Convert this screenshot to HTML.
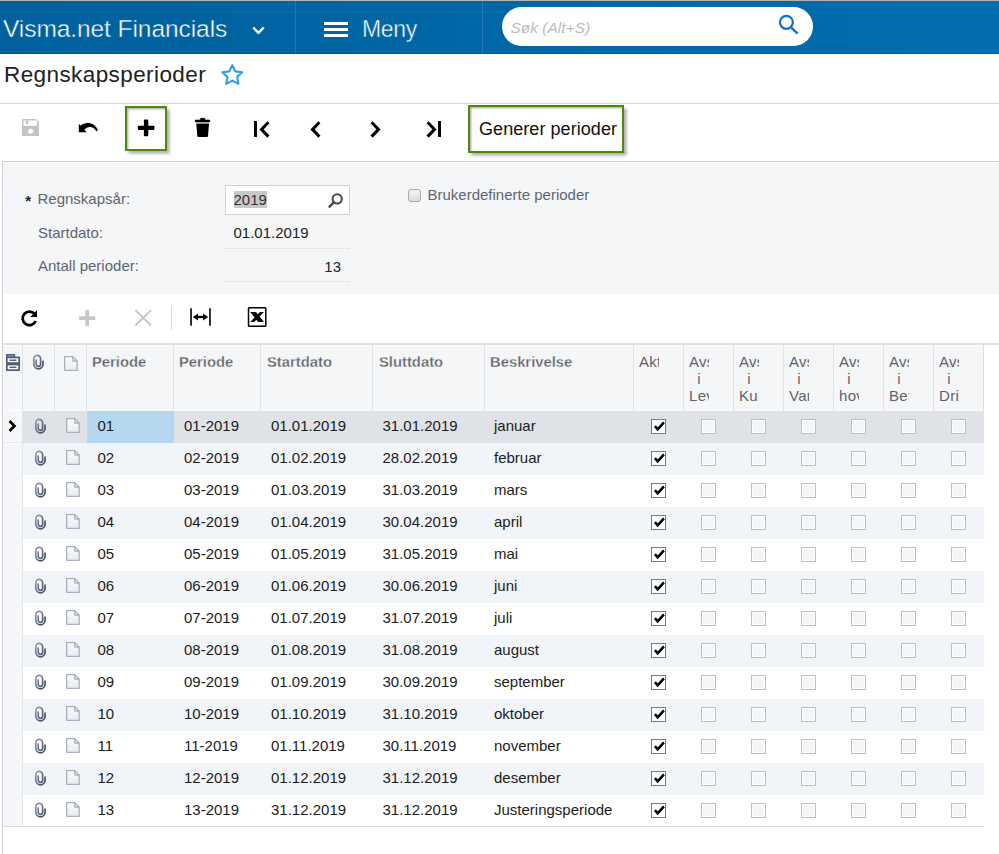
<!DOCTYPE html>
<html>
<head>
<meta charset="utf-8">
<title>Regnskapsperioder</title>
<style>
*{box-sizing:border-box;margin:0;padding:0}
html,body{width:999px;height:854px;overflow:hidden;background:#fff}
body{position:relative;font-family:"Liberation Sans",sans-serif;font-size:15px;color:#222;}
.abs{position:absolute}
.t{position:absolute;white-space:nowrap;line-height:1}
svg{position:absolute;overflow:visible}
/* header */
#topline{left:0;top:0;width:999px;height:1px;background:#b5b5b5}
#hdr{left:0;top:1px;width:999px;height:53px;background:linear-gradient(90deg,#00619d 0%,#006eaf 100%);border-bottom:1px solid rgba(0,40,90,.25)}
.hsep{top:1px;width:1px;height:53px;background:rgba(255,255,255,.13)}
#brand{left:3px;top:17px;font-size:24.5px;letter-spacing:-0.07px;color:#fff;-webkit-text-stroke:0.4px #00629f}
#meny{left:362px;top:18px;font-size:23px;letter-spacing:-0.3px;color:#fff;-webkit-text-stroke:0.4px #0066a5}
.hb{left:324px;width:24px;height:3px;background:#fff}
#search{left:502px;top:7px;width:310.5px;height:39px;border-radius:20px;background:#fff}
#sph{left:510.5px;top:19.5px;font-size:15.5px;font-style:italic;color:#bdbdbd}
/* title */
#title{left:4px;top:63.5px;font-size:22.5px;letter-spacing:0.41px;color:#222}
.hline{left:0;width:999px;height:1px;background:#d3d6db}
/* toolbar */
.gbtn{border:2px solid #4b8a0b;background:#fff;box-shadow:2.5px 2.5px 3px rgba(0,0,0,.33), inset 1.5px 1.5px 1.5px rgba(0,0,0,.28)}
#gen{left:479px;top:120px;font-size:18px;letter-spacing:0.06px;color:#111}
/* form */
#form{left:2px;top:161px;width:997px;height:132.5px;background:#f5f6f8;border-top:1px solid #cfd1d5;box-shadow:inset 0 1px 0 #fff}
#lborder{left:2px;top:161px;width:1px;height:693px;background:#cfd2d7}
.lbl{color:#5f6570;font-size:15px}
.val{color:#222;font-size:15px}
.dot{height:1px;left:225px;width:125px;background-image:linear-gradient(90deg,#d4d6da 50%,transparent 50%);background-size:2px 1px}
#inp{left:225px;top:185px;width:125px;height:29.5px;background:#fff;border:1px solid #cfd2d6}
#sel{left:233.6px;top:191px;width:33.4px;height:16.7px;background:#c8c8c8}
#cb0{left:408px;top:189px;width:13px;height:13px;border:1px solid #a9a9a9;border-radius:3px;background:linear-gradient(#f4f4f4,#dcdcdc)}
/* grid */
#gline{left:3px;top:343px;width:996px;height:2px;background:#dfe1e5}
#ghead{left:3px;top:345px;width:981px;height:65.5px;box-shadow:inset 0 -1.5px 0 #fafbfc,inset 0 1px 0 #fcfcfd;background:#f5f6f8}
.vs{top:345px;width:1px;height:65.5px;background:#dfe2e7}
.ht{position:absolute;top:354px;font-weight:bold;font-size:14.8px;line-height:17px;color:#5e6166;-webkit-text-stroke:0.3px #f5f6f8;white-space:nowrap;overflow:hidden}
.hc{top:352.6px;-webkit-text-stroke:0;width:20.3px;text-align:center;font-weight:normal;font-size:15px;letter-spacing:0.3px;color:#5f6369}
.row{position:absolute;left:23px;width:961px;height:32px}
.c{font-size:15px;color:#1c1c1c}
.ck{position:absolute;width:15px;height:15px;border:1px solid #bdbfc3;background:#f4f5f7;box-shadow:inset 0 0 0 1px #fff}
.row.alt{background:#f1f4f9}
.row.sel{background:#dfe2e7}
#selcell{left:87px;width:87px;height:32px;background:#b5d6ef}
#rowsel{left:3px;top:410.5px;width:20px;height:416px;background:#f5f6f8}
.ck.on{border-color:#7a7a7a;background:#fff;box-shadow:none}
#gbot{left:3px;top:826px;width:981px;height:1px;background:#d9dce0}
</style>
</head>
<body>
<svg width="0" height="0" style="left:0;top:0"><defs>
<linearGradient id="cg" x1="0" y1="0" x2="1" y2="1"><stop offset="0" stop-color="#97a0ad"/><stop offset="1" stop-color="#36425a"/></linearGradient>
<linearGradient id="fg" x1="0" y1="0" x2="0" y2="1"><stop offset="0" stop-color="#fbfbfc"/><stop offset="1" stop-color="#e9ebef"/></linearGradient>
</defs></svg>
<div class="abs" id="hdr"></div>
<div class="abs" id="topline"></div>
<div class="t" id="brand">Visma.net Financials</div>
<svg style="left:252px;top:26px" width="13" height="9" viewBox="0 0 13 9"><path d="M1.2 1.5 L6.5 6.8 L11.8 1.5" fill="none" stroke="#fff" stroke-width="2.4"/></svg>
<div class="abs hsep" style="left:295px"></div>
<div class="abs hb" style="top:22px"></div>
<div class="abs hb" style="top:28px"></div>
<div class="abs hb" style="top:34px"></div>
<div class="t" id="meny">Meny</div>
<div class="abs hsep" style="left:482px"></div>
<div class="abs" id="search"></div>
<div class="t" id="sph">Søk (Alt+S)</div>
<svg style="left:777px;top:14px" width="24" height="24" viewBox="0 0 24 24"><circle cx="9.4" cy="8.3" r="6.5" fill="none" stroke="#1670c6" stroke-width="2.2"/><path d="M14.3 13.6 L20.6 19.6" stroke="#1670c6" stroke-width="2.4" fill="none"/></svg>

<div class="t" id="title">Regnskapsperioder</div>
<svg style="left:0;top:0" width="260" height="100" viewBox="0 0 260 100"><path d="M232.30 65.10 L235.30 71.37 L242.19 72.29 L237.15 77.08 L238.41 83.91 L232.30 80.60 L226.19 83.91 L227.45 77.08 L222.41 72.29 L229.30 71.37 Z" fill="none" stroke="#2e9de8" stroke-width="2.1" stroke-linejoin="round"/></svg>
<div class="abs hline" style="top:103px"></div>

<!-- toolbar -->
<div class="abs gbtn" style="left:125px;top:106px;width:42px;height:45px"></div>
<div class="abs gbtn" style="left:468px;top:105px;width:156px;height:47.5px"></div>
<div class="t" id="gen">Generer perioder</div>

<!-- toolbar icons -->
<svg style="left:22px;top:119.2px" width="17" height="17" viewBox="0 0 17 17"><path d="M0.6 0 H14 L17 3 V16.4 Q17 17 16.4 17 H0.6 Q0 17 0 16.4 V0.6 Q0 0 0.6 0Z" fill="#c4c4c4"/><rect x="1.5" y="1.5" width="13.6" height="5.4" fill="#fff"/><rect x="3.8" y="1.5" width="2.4" height="3.4" fill="#c4c4c4"/><circle cx="8.6" cy="12.3" r="2.5" fill="#fff"/></svg>
<svg style="left:0;top:0" width="120" height="160" viewBox="0 0 120 160"><path d="M78.8 123.8 L78.8 132.3 L86.8 132.3 L84.3 129.8 C86.8 126.6 92.8 125.2 96.4 131.2 L97.9 130.4 C95.6 122.4 85.2 120.8 80.7 125.7 Z" fill="#000"/></svg>
<svg style="left:0;top:0" width="170" height="150" viewBox="0 0 170 150"><rect x="137.8" y="125.7" width="16.6" height="4.4" rx="1" fill="#000"/><rect x="143.9" y="119.6" width="4.4" height="16.6" rx="1" fill="#000"/></svg>
<svg style="left:194px;top:117px" width="18" height="21" viewBox="0 0 18 21"><path d="M6.4 1.3 H10.9 V3 H15.7 V5 H1.3 V3 H6.4 Z" fill="#000" stroke="#000" stroke-width="0.6" stroke-linejoin="round"/><rect x="2.4" y="5.1" width="12.2" height="1.7" fill="#aaa"/><path d="M2.3 6.8 H15 L14 19 Q13.9 20 12.9 20 H4.4 Q3.4 20 3.3 19 Z" fill="#000"/></svg>
<div class="abs" style="left:254px;top:121px;width:3px;height:16px;background:#000"></div>
<svg style="left:258.6px;top:120.5px" width="12" height="17" viewBox="0 0 12 17"><path d="M9.4 1.2 L2.5 8.4 L9.4 15.6" stroke="#000" stroke-width="3" fill="none"/></svg>
<svg style="left:310.4px;top:120.5px" width="12" height="17" viewBox="0 0 12 17"><path d="M9.4 1.2 L2.5 8.4 L9.4 15.6" stroke="#000" stroke-width="3" fill="none"/></svg>
<svg style="left:369px;top:120.5px" width="12" height="17" viewBox="0 0 12 17"><path d="M2.6 1.2 L9.5 8.4 L2.6 15.6" stroke="#000" stroke-width="3" fill="none"/></svg>
<svg style="left:424.7px;top:120.5px" width="12" height="17" viewBox="0 0 12 17"><path d="M2.6 1.2 L9.5 8.4 L2.6 15.6" stroke="#000" stroke-width="3" fill="none"/></svg>
<div class="abs" style="left:438.3px;top:121px;width:3px;height:16px;background:#000"></div>

<!-- form -->
<div class="abs" id="form"></div>
<div class="t lbl" style="left:25.2px;top:192.5px;color:#222;font-size:15px;font-weight:bold">*</div>
<div class="t lbl" style="left:37.5px;top:190.5px">Regnskapsår:</div>
<div class="t lbl" style="left:38px;top:224.5px">Startdato:</div>
<div class="t lbl" style="left:38px;top:257.5px">Antall perioder:</div>
<div class="abs" id="inp"></div>
<div class="abs" id="sel"></div>
<svg style="left:325px;top:190px" width="22" height="20" viewBox="325 190 22 20"><circle cx="337.2" cy="198.9" r="4.6" fill="none" stroke="#4a4a4a" stroke-width="2.1"/><path d="M334 202.2 L329.6 206.6" stroke="#4a4a4a" stroke-width="2.6" stroke-linecap="round" fill="none"/></svg>
<div class="t val" style="left:233.5px;top:191.5px;color:#333">2019</div>
<div class="t val" style="left:233.5px;top:225px">01.01.2019</div>
<div class="abs dot" style="top:248px"></div>
<div class="t val" style="left:324.3px;top:259px">13</div>
<div class="abs dot" style="top:281px"></div>
<div class="abs" id="cb0"></div>
<div class="t lbl" style="left:427.5px;top:186.5px">Brukerdefinerte perioder</div>

<!-- grid toolbar -->
<svg style="left:0;top:290px" width="300" height="60" viewBox="0 290 300 60">
<path d="M34.6 313.9 A6.8 6.8 0 1 0 35.7 321" fill="none" stroke="#000" stroke-width="2.8"/>
<path d="M37 310.1 V316.9 H30.4 Z" fill="#000"/>
<path d="M87.2 310 V326.2 M79.1 318.1 H95.3" stroke="#c6c6c6" stroke-width="3.6" fill="none"/>
<path d="M135.4 310.1 L151 325.5 M151 310.1 L135.4 325.5" stroke="#c6c6c6" stroke-width="2" fill="none"/>
<path d="M171.5 306 V330" stroke="#d9d9d9" stroke-width="1"/>
<path d="M191.05 308.3 V325.8 M209.95 308.3 V325.8" stroke="#000" stroke-width="1.6" fill="none"/>
<path d="M195.5 317 H205.5" stroke="#000" stroke-width="2.4" fill="none"/>
<path d="M192.8 317 L198 313.4 V320.6 Z M208.2 317 L203 313.4 V320.6 Z" fill="#000"/>
<rect x="248.5" y="307.8" width="17.3" height="18.5" rx="0.8" fill="#fff" stroke="#000" stroke-width="1.5"/>
<path d="M250.2 312 H256 L264 321.9 H258.2 Z" fill="#000"/><path d="M264 312 H260 L250.2 321.9 H254.2 Z" fill="#000"/>
</svg>

<!-- grid -->
<div class="abs" id="gline"></div>
<div class="abs" id="ghead"></div>
<div class="abs" id="rowsel"></div>
<div class="abs vs" style="left:22px"></div><div class="abs vs" style="left:54px"></div><div class="abs vs" style="left:86px"></div><div class="abs vs" style="left:173px"></div><div class="abs vs" style="left:260px"></div><div class="abs vs" style="left:372px"></div><div class="abs vs" style="left:484px"></div><div class="abs vs" style="left:633px"></div><div class="abs vs" style="left:683px"></div><div class="abs vs" style="left:733px"></div><div class="abs vs" style="left:783px"></div><div class="abs vs" style="left:833px"></div><div class="abs vs" style="left:883px"></div><div class="abs vs" style="left:933px"></div><div class="abs vs" style="left:983px;background:#d9dce1"></div>
<svg style="left:6px;top:353.8px" width="14" height="17" viewBox="0 0 14 17"><path d="M0 0.6 Q0 0 0.6 0 H8.6 Q9.2 0 9.2 0.6 V2.6 H13.4 Q14 2.6 14 3.2 V16.4 Q14 17 13.4 17 H0.6 Q0 17 0 16.4 Z" fill="#4f6079"/><rect x="1.7" y="4.3" width="10.6" height="3.9" fill="#fff"/><rect x="1.7" y="11.4" width="10.6" height="3.9" fill="#fff"/><rect x="3.6" y="5.5" width="6.8" height="1.5" fill="#4f6079"/><rect x="3.6" y="12.6" width="6.8" height="1.5" fill="#4f6079"/><rect x="1.6" y="1.2" width="6" height="1.2" fill="#8b97a8"/></svg>
<svg style="left:32.1px;top:354.3px" width="12" height="17" viewBox="0 0 12 17"><path d="M11 7.2 V10.2 A4.6 4.6 0 0 1 1.8 10.2 V4.75 A3.4 3.4 0 0 1 8.6 4.75 V10.2 A2.2 2.2 0 0 1 4.2 10.2 V6" fill="none" stroke="url(#cg)" stroke-width="1.7" stroke-linecap="round"/></svg>
<svg style="left:64px;top:355.6px" width="14" height="15" viewBox="0 0 14 15"><path d="M0.65 0.65 H8.8 L13.15 5 V14.35 H0.65 Z" fill="url(#fg)" stroke="#abb0ba" stroke-width="1.3" stroke-linejoin="round"/><path d="M8.8 0.65 V5 H13.15" fill="none" stroke="#abb0ba" stroke-width="1.3" stroke-linejoin="round"/></svg>
<div class="ht" style="left:92px">Periode</div><div class="ht" style="left:179px">Periode</div><div class="ht" style="left:267px">Startdato</div><div class="ht" style="left:379px">Sluttdato</div><div class="ht" style="left:490px">Beskrivelse</div><div class="ht hc" style="left:639.0px">Aktiv</div><div class="ht hc" style="left:689.0px">Avsluttet<br>i<br>Leverandør</div><div class="ht hc" style="left:739.0px">Avsluttet<br>i<br>Kunde</div><div class="ht hc" style="left:789.0px">Avsluttet<br>i<br>Varelager</div><div class="ht hc" style="left:839.0px">Avsluttet<br>i<br>hovedbok</div><div class="ht hc" style="left:889.0px">Avsluttet<br>i<br>Betaling</div><div class="ht hc" style="left:939.0px">Avsluttet<br>i<br>Drift</div>
<svg style="left:8px;top:419.6px" width="9" height="12" viewBox="0 0 9 12"><path d="M1.6 1 L6.4 6 L1.6 11" stroke="#000" stroke-width="2.8" fill="none"/></svg>

<div class="row sel" style="top:410.5px"></div>
<div class="abs" id="selcell" style="top:410.5px"></div>
<svg style="left:34px;top:417.5px" width="12" height="17" viewBox="0 0 12 17"><path d="M11 7.2 V10.2 A4.6 4.6 0 0 1 1.8 10.2 V4.75 A3.4 3.4 0 0 1 8.6 4.75 V10.2 A2.2 2.2 0 0 1 4.2 10.2 V6" fill="none" stroke="url(#cg)" stroke-width="1.7" stroke-linecap="round"/></svg>
<svg style="left:66px;top:418.4px" width="14" height="15" viewBox="0 0 14 15"><path d="M0.65 0.65 H8.8 L13.15 5 V14.35 H0.65 Z" fill="url(#fg)" stroke="#abb0ba" stroke-width="1.3" stroke-linejoin="round"/><path d="M8.8 0.65 V5 H13.15" fill="none" stroke="#abb0ba" stroke-width="1.3" stroke-linejoin="round"/></svg>
<div class="t c" style="left:97.5px;top:418.0px">01</div>
<div class="t c" style="left:184px;top:418.0px">01-2019</div>
<div class="t c" style="left:271px;top:418.0px">01.01.2019</div>
<div class="t c" style="left:382.5px;top:418.0px">31.01.2019</div>
<div class="t c" style="left:494px;top:418.0px">januar</div>
<div class="ck on" style="left:651px;top:419.0px"><svg style="left:1px;top:0.4px" width="11" height="11" viewBox="0 0 11 11"><path d="M1.9 6.2 L4.7 9.3 L10.9 2.4" fill="none" stroke="#000" stroke-width="2.5"/></svg></div>
<div class="ck" style="left:701px;top:419.0px"></div>
<div class="ck" style="left:751px;top:419.0px"></div>
<div class="ck" style="left:801px;top:419.0px"></div>
<div class="ck" style="left:851px;top:419.0px"></div>
<div class="ck" style="left:901px;top:419.0px"></div>
<div class="ck" style="left:951px;top:419.0px"></div>
<div class="row alt" style="top:442.5px"></div>
<svg style="left:34px;top:449.5px" width="12" height="17" viewBox="0 0 12 17"><path d="M11 7.2 V10.2 A4.6 4.6 0 0 1 1.8 10.2 V4.75 A3.4 3.4 0 0 1 8.6 4.75 V10.2 A2.2 2.2 0 0 1 4.2 10.2 V6" fill="none" stroke="url(#cg)" stroke-width="1.7" stroke-linecap="round"/></svg>
<svg style="left:66px;top:450.4px" width="14" height="15" viewBox="0 0 14 15"><path d="M0.65 0.65 H8.8 L13.15 5 V14.35 H0.65 Z" fill="url(#fg)" stroke="#abb0ba" stroke-width="1.3" stroke-linejoin="round"/><path d="M8.8 0.65 V5 H13.15" fill="none" stroke="#abb0ba" stroke-width="1.3" stroke-linejoin="round"/></svg>
<div class="t c" style="left:97.5px;top:450.0px">02</div>
<div class="t c" style="left:184px;top:450.0px">02-2019</div>
<div class="t c" style="left:271px;top:450.0px">01.02.2019</div>
<div class="t c" style="left:382.5px;top:450.0px">28.02.2019</div>
<div class="t c" style="left:494px;top:450.0px">februar</div>
<div class="ck on" style="left:651px;top:451.0px"><svg style="left:1px;top:0.4px" width="11" height="11" viewBox="0 0 11 11"><path d="M1.9 6.2 L4.7 9.3 L10.9 2.4" fill="none" stroke="#000" stroke-width="2.5"/></svg></div>
<div class="ck" style="left:701px;top:451.0px"></div>
<div class="ck" style="left:751px;top:451.0px"></div>
<div class="ck" style="left:801px;top:451.0px"></div>
<div class="ck" style="left:851px;top:451.0px"></div>
<div class="ck" style="left:901px;top:451.0px"></div>
<div class="ck" style="left:951px;top:451.0px"></div>
<div class="row" style="top:474.5px"></div>
<svg style="left:34px;top:481.5px" width="12" height="17" viewBox="0 0 12 17"><path d="M11 7.2 V10.2 A4.6 4.6 0 0 1 1.8 10.2 V4.75 A3.4 3.4 0 0 1 8.6 4.75 V10.2 A2.2 2.2 0 0 1 4.2 10.2 V6" fill="none" stroke="url(#cg)" stroke-width="1.7" stroke-linecap="round"/></svg>
<svg style="left:66px;top:482.4px" width="14" height="15" viewBox="0 0 14 15"><path d="M0.65 0.65 H8.8 L13.15 5 V14.35 H0.65 Z" fill="url(#fg)" stroke="#abb0ba" stroke-width="1.3" stroke-linejoin="round"/><path d="M8.8 0.65 V5 H13.15" fill="none" stroke="#abb0ba" stroke-width="1.3" stroke-linejoin="round"/></svg>
<div class="t c" style="left:97.5px;top:482.0px">03</div>
<div class="t c" style="left:184px;top:482.0px">03-2019</div>
<div class="t c" style="left:271px;top:482.0px">01.03.2019</div>
<div class="t c" style="left:382.5px;top:482.0px">31.03.2019</div>
<div class="t c" style="left:494px;top:482.0px">mars</div>
<div class="ck on" style="left:651px;top:483.0px"><svg style="left:1px;top:0.4px" width="11" height="11" viewBox="0 0 11 11"><path d="M1.9 6.2 L4.7 9.3 L10.9 2.4" fill="none" stroke="#000" stroke-width="2.5"/></svg></div>
<div class="ck" style="left:701px;top:483.0px"></div>
<div class="ck" style="left:751px;top:483.0px"></div>
<div class="ck" style="left:801px;top:483.0px"></div>
<div class="ck" style="left:851px;top:483.0px"></div>
<div class="ck" style="left:901px;top:483.0px"></div>
<div class="ck" style="left:951px;top:483.0px"></div>
<div class="row alt" style="top:506.5px"></div>
<svg style="left:34px;top:513.5px" width="12" height="17" viewBox="0 0 12 17"><path d="M11 7.2 V10.2 A4.6 4.6 0 0 1 1.8 10.2 V4.75 A3.4 3.4 0 0 1 8.6 4.75 V10.2 A2.2 2.2 0 0 1 4.2 10.2 V6" fill="none" stroke="url(#cg)" stroke-width="1.7" stroke-linecap="round"/></svg>
<svg style="left:66px;top:514.4px" width="14" height="15" viewBox="0 0 14 15"><path d="M0.65 0.65 H8.8 L13.15 5 V14.35 H0.65 Z" fill="url(#fg)" stroke="#abb0ba" stroke-width="1.3" stroke-linejoin="round"/><path d="M8.8 0.65 V5 H13.15" fill="none" stroke="#abb0ba" stroke-width="1.3" stroke-linejoin="round"/></svg>
<div class="t c" style="left:97.5px;top:514.0px">04</div>
<div class="t c" style="left:184px;top:514.0px">04-2019</div>
<div class="t c" style="left:271px;top:514.0px">01.04.2019</div>
<div class="t c" style="left:382.5px;top:514.0px">30.04.2019</div>
<div class="t c" style="left:494px;top:514.0px">april</div>
<div class="ck on" style="left:651px;top:515.0px"><svg style="left:1px;top:0.4px" width="11" height="11" viewBox="0 0 11 11"><path d="M1.9 6.2 L4.7 9.3 L10.9 2.4" fill="none" stroke="#000" stroke-width="2.5"/></svg></div>
<div class="ck" style="left:701px;top:515.0px"></div>
<div class="ck" style="left:751px;top:515.0px"></div>
<div class="ck" style="left:801px;top:515.0px"></div>
<div class="ck" style="left:851px;top:515.0px"></div>
<div class="ck" style="left:901px;top:515.0px"></div>
<div class="ck" style="left:951px;top:515.0px"></div>
<div class="row" style="top:538.5px"></div>
<svg style="left:34px;top:545.5px" width="12" height="17" viewBox="0 0 12 17"><path d="M11 7.2 V10.2 A4.6 4.6 0 0 1 1.8 10.2 V4.75 A3.4 3.4 0 0 1 8.6 4.75 V10.2 A2.2 2.2 0 0 1 4.2 10.2 V6" fill="none" stroke="url(#cg)" stroke-width="1.7" stroke-linecap="round"/></svg>
<svg style="left:66px;top:546.4px" width="14" height="15" viewBox="0 0 14 15"><path d="M0.65 0.65 H8.8 L13.15 5 V14.35 H0.65 Z" fill="url(#fg)" stroke="#abb0ba" stroke-width="1.3" stroke-linejoin="round"/><path d="M8.8 0.65 V5 H13.15" fill="none" stroke="#abb0ba" stroke-width="1.3" stroke-linejoin="round"/></svg>
<div class="t c" style="left:97.5px;top:546.0px">05</div>
<div class="t c" style="left:184px;top:546.0px">05-2019</div>
<div class="t c" style="left:271px;top:546.0px">01.05.2019</div>
<div class="t c" style="left:382.5px;top:546.0px">31.05.2019</div>
<div class="t c" style="left:494px;top:546.0px">mai</div>
<div class="ck on" style="left:651px;top:547.0px"><svg style="left:1px;top:0.4px" width="11" height="11" viewBox="0 0 11 11"><path d="M1.9 6.2 L4.7 9.3 L10.9 2.4" fill="none" stroke="#000" stroke-width="2.5"/></svg></div>
<div class="ck" style="left:701px;top:547.0px"></div>
<div class="ck" style="left:751px;top:547.0px"></div>
<div class="ck" style="left:801px;top:547.0px"></div>
<div class="ck" style="left:851px;top:547.0px"></div>
<div class="ck" style="left:901px;top:547.0px"></div>
<div class="ck" style="left:951px;top:547.0px"></div>
<div class="row alt" style="top:570.5px"></div>
<svg style="left:34px;top:577.5px" width="12" height="17" viewBox="0 0 12 17"><path d="M11 7.2 V10.2 A4.6 4.6 0 0 1 1.8 10.2 V4.75 A3.4 3.4 0 0 1 8.6 4.75 V10.2 A2.2 2.2 0 0 1 4.2 10.2 V6" fill="none" stroke="url(#cg)" stroke-width="1.7" stroke-linecap="round"/></svg>
<svg style="left:66px;top:578.4px" width="14" height="15" viewBox="0 0 14 15"><path d="M0.65 0.65 H8.8 L13.15 5 V14.35 H0.65 Z" fill="url(#fg)" stroke="#abb0ba" stroke-width="1.3" stroke-linejoin="round"/><path d="M8.8 0.65 V5 H13.15" fill="none" stroke="#abb0ba" stroke-width="1.3" stroke-linejoin="round"/></svg>
<div class="t c" style="left:97.5px;top:578.0px">06</div>
<div class="t c" style="left:184px;top:578.0px">06-2019</div>
<div class="t c" style="left:271px;top:578.0px">01.06.2019</div>
<div class="t c" style="left:382.5px;top:578.0px">30.06.2019</div>
<div class="t c" style="left:494px;top:578.0px">juni</div>
<div class="ck on" style="left:651px;top:579.0px"><svg style="left:1px;top:0.4px" width="11" height="11" viewBox="0 0 11 11"><path d="M1.9 6.2 L4.7 9.3 L10.9 2.4" fill="none" stroke="#000" stroke-width="2.5"/></svg></div>
<div class="ck" style="left:701px;top:579.0px"></div>
<div class="ck" style="left:751px;top:579.0px"></div>
<div class="ck" style="left:801px;top:579.0px"></div>
<div class="ck" style="left:851px;top:579.0px"></div>
<div class="ck" style="left:901px;top:579.0px"></div>
<div class="ck" style="left:951px;top:579.0px"></div>
<div class="row" style="top:602.5px"></div>
<svg style="left:34px;top:609.5px" width="12" height="17" viewBox="0 0 12 17"><path d="M11 7.2 V10.2 A4.6 4.6 0 0 1 1.8 10.2 V4.75 A3.4 3.4 0 0 1 8.6 4.75 V10.2 A2.2 2.2 0 0 1 4.2 10.2 V6" fill="none" stroke="url(#cg)" stroke-width="1.7" stroke-linecap="round"/></svg>
<svg style="left:66px;top:610.4px" width="14" height="15" viewBox="0 0 14 15"><path d="M0.65 0.65 H8.8 L13.15 5 V14.35 H0.65 Z" fill="url(#fg)" stroke="#abb0ba" stroke-width="1.3" stroke-linejoin="round"/><path d="M8.8 0.65 V5 H13.15" fill="none" stroke="#abb0ba" stroke-width="1.3" stroke-linejoin="round"/></svg>
<div class="t c" style="left:97.5px;top:610.0px">07</div>
<div class="t c" style="left:184px;top:610.0px">07-2019</div>
<div class="t c" style="left:271px;top:610.0px">01.07.2019</div>
<div class="t c" style="left:382.5px;top:610.0px">31.07.2019</div>
<div class="t c" style="left:494px;top:610.0px">juli</div>
<div class="ck on" style="left:651px;top:611.0px"><svg style="left:1px;top:0.4px" width="11" height="11" viewBox="0 0 11 11"><path d="M1.9 6.2 L4.7 9.3 L10.9 2.4" fill="none" stroke="#000" stroke-width="2.5"/></svg></div>
<div class="ck" style="left:701px;top:611.0px"></div>
<div class="ck" style="left:751px;top:611.0px"></div>
<div class="ck" style="left:801px;top:611.0px"></div>
<div class="ck" style="left:851px;top:611.0px"></div>
<div class="ck" style="left:901px;top:611.0px"></div>
<div class="ck" style="left:951px;top:611.0px"></div>
<div class="row alt" style="top:634.5px"></div>
<svg style="left:34px;top:641.5px" width="12" height="17" viewBox="0 0 12 17"><path d="M11 7.2 V10.2 A4.6 4.6 0 0 1 1.8 10.2 V4.75 A3.4 3.4 0 0 1 8.6 4.75 V10.2 A2.2 2.2 0 0 1 4.2 10.2 V6" fill="none" stroke="url(#cg)" stroke-width="1.7" stroke-linecap="round"/></svg>
<svg style="left:66px;top:642.4px" width="14" height="15" viewBox="0 0 14 15"><path d="M0.65 0.65 H8.8 L13.15 5 V14.35 H0.65 Z" fill="url(#fg)" stroke="#abb0ba" stroke-width="1.3" stroke-linejoin="round"/><path d="M8.8 0.65 V5 H13.15" fill="none" stroke="#abb0ba" stroke-width="1.3" stroke-linejoin="round"/></svg>
<div class="t c" style="left:97.5px;top:642.0px">08</div>
<div class="t c" style="left:184px;top:642.0px">08-2019</div>
<div class="t c" style="left:271px;top:642.0px">01.08.2019</div>
<div class="t c" style="left:382.5px;top:642.0px">31.08.2019</div>
<div class="t c" style="left:494px;top:642.0px">august</div>
<div class="ck on" style="left:651px;top:643.0px"><svg style="left:1px;top:0.4px" width="11" height="11" viewBox="0 0 11 11"><path d="M1.9 6.2 L4.7 9.3 L10.9 2.4" fill="none" stroke="#000" stroke-width="2.5"/></svg></div>
<div class="ck" style="left:701px;top:643.0px"></div>
<div class="ck" style="left:751px;top:643.0px"></div>
<div class="ck" style="left:801px;top:643.0px"></div>
<div class="ck" style="left:851px;top:643.0px"></div>
<div class="ck" style="left:901px;top:643.0px"></div>
<div class="ck" style="left:951px;top:643.0px"></div>
<div class="row" style="top:666.5px"></div>
<svg style="left:34px;top:673.5px" width="12" height="17" viewBox="0 0 12 17"><path d="M11 7.2 V10.2 A4.6 4.6 0 0 1 1.8 10.2 V4.75 A3.4 3.4 0 0 1 8.6 4.75 V10.2 A2.2 2.2 0 0 1 4.2 10.2 V6" fill="none" stroke="url(#cg)" stroke-width="1.7" stroke-linecap="round"/></svg>
<svg style="left:66px;top:674.4px" width="14" height="15" viewBox="0 0 14 15"><path d="M0.65 0.65 H8.8 L13.15 5 V14.35 H0.65 Z" fill="url(#fg)" stroke="#abb0ba" stroke-width="1.3" stroke-linejoin="round"/><path d="M8.8 0.65 V5 H13.15" fill="none" stroke="#abb0ba" stroke-width="1.3" stroke-linejoin="round"/></svg>
<div class="t c" style="left:97.5px;top:674.0px">09</div>
<div class="t c" style="left:184px;top:674.0px">09-2019</div>
<div class="t c" style="left:271px;top:674.0px">01.09.2019</div>
<div class="t c" style="left:382.5px;top:674.0px">30.09.2019</div>
<div class="t c" style="left:494px;top:674.0px">september</div>
<div class="ck on" style="left:651px;top:675.0px"><svg style="left:1px;top:0.4px" width="11" height="11" viewBox="0 0 11 11"><path d="M1.9 6.2 L4.7 9.3 L10.9 2.4" fill="none" stroke="#000" stroke-width="2.5"/></svg></div>
<div class="ck" style="left:701px;top:675.0px"></div>
<div class="ck" style="left:751px;top:675.0px"></div>
<div class="ck" style="left:801px;top:675.0px"></div>
<div class="ck" style="left:851px;top:675.0px"></div>
<div class="ck" style="left:901px;top:675.0px"></div>
<div class="ck" style="left:951px;top:675.0px"></div>
<div class="row alt" style="top:698.5px"></div>
<svg style="left:34px;top:705.5px" width="12" height="17" viewBox="0 0 12 17"><path d="M11 7.2 V10.2 A4.6 4.6 0 0 1 1.8 10.2 V4.75 A3.4 3.4 0 0 1 8.6 4.75 V10.2 A2.2 2.2 0 0 1 4.2 10.2 V6" fill="none" stroke="url(#cg)" stroke-width="1.7" stroke-linecap="round"/></svg>
<svg style="left:66px;top:706.4px" width="14" height="15" viewBox="0 0 14 15"><path d="M0.65 0.65 H8.8 L13.15 5 V14.35 H0.65 Z" fill="url(#fg)" stroke="#abb0ba" stroke-width="1.3" stroke-linejoin="round"/><path d="M8.8 0.65 V5 H13.15" fill="none" stroke="#abb0ba" stroke-width="1.3" stroke-linejoin="round"/></svg>
<div class="t c" style="left:97.5px;top:706.0px">10</div>
<div class="t c" style="left:184px;top:706.0px">10-2019</div>
<div class="t c" style="left:271px;top:706.0px">01.10.2019</div>
<div class="t c" style="left:382.5px;top:706.0px">31.10.2019</div>
<div class="t c" style="left:494px;top:706.0px">oktober</div>
<div class="ck on" style="left:651px;top:707.0px"><svg style="left:1px;top:0.4px" width="11" height="11" viewBox="0 0 11 11"><path d="M1.9 6.2 L4.7 9.3 L10.9 2.4" fill="none" stroke="#000" stroke-width="2.5"/></svg></div>
<div class="ck" style="left:701px;top:707.0px"></div>
<div class="ck" style="left:751px;top:707.0px"></div>
<div class="ck" style="left:801px;top:707.0px"></div>
<div class="ck" style="left:851px;top:707.0px"></div>
<div class="ck" style="left:901px;top:707.0px"></div>
<div class="ck" style="left:951px;top:707.0px"></div>
<div class="row" style="top:730.5px"></div>
<svg style="left:34px;top:737.5px" width="12" height="17" viewBox="0 0 12 17"><path d="M11 7.2 V10.2 A4.6 4.6 0 0 1 1.8 10.2 V4.75 A3.4 3.4 0 0 1 8.6 4.75 V10.2 A2.2 2.2 0 0 1 4.2 10.2 V6" fill="none" stroke="url(#cg)" stroke-width="1.7" stroke-linecap="round"/></svg>
<svg style="left:66px;top:738.4px" width="14" height="15" viewBox="0 0 14 15"><path d="M0.65 0.65 H8.8 L13.15 5 V14.35 H0.65 Z" fill="url(#fg)" stroke="#abb0ba" stroke-width="1.3" stroke-linejoin="round"/><path d="M8.8 0.65 V5 H13.15" fill="none" stroke="#abb0ba" stroke-width="1.3" stroke-linejoin="round"/></svg>
<div class="t c" style="left:97.5px;top:738.0px">11</div>
<div class="t c" style="left:184px;top:738.0px">11-2019</div>
<div class="t c" style="left:271px;top:738.0px">01.11.2019</div>
<div class="t c" style="left:382.5px;top:738.0px">30.11.2019</div>
<div class="t c" style="left:494px;top:738.0px">november</div>
<div class="ck on" style="left:651px;top:739.0px"><svg style="left:1px;top:0.4px" width="11" height="11" viewBox="0 0 11 11"><path d="M1.9 6.2 L4.7 9.3 L10.9 2.4" fill="none" stroke="#000" stroke-width="2.5"/></svg></div>
<div class="ck" style="left:701px;top:739.0px"></div>
<div class="ck" style="left:751px;top:739.0px"></div>
<div class="ck" style="left:801px;top:739.0px"></div>
<div class="ck" style="left:851px;top:739.0px"></div>
<div class="ck" style="left:901px;top:739.0px"></div>
<div class="ck" style="left:951px;top:739.0px"></div>
<div class="row alt" style="top:762.5px"></div>
<svg style="left:34px;top:769.5px" width="12" height="17" viewBox="0 0 12 17"><path d="M11 7.2 V10.2 A4.6 4.6 0 0 1 1.8 10.2 V4.75 A3.4 3.4 0 0 1 8.6 4.75 V10.2 A2.2 2.2 0 0 1 4.2 10.2 V6" fill="none" stroke="url(#cg)" stroke-width="1.7" stroke-linecap="round"/></svg>
<svg style="left:66px;top:770.4px" width="14" height="15" viewBox="0 0 14 15"><path d="M0.65 0.65 H8.8 L13.15 5 V14.35 H0.65 Z" fill="url(#fg)" stroke="#abb0ba" stroke-width="1.3" stroke-linejoin="round"/><path d="M8.8 0.65 V5 H13.15" fill="none" stroke="#abb0ba" stroke-width="1.3" stroke-linejoin="round"/></svg>
<div class="t c" style="left:97.5px;top:770.0px">12</div>
<div class="t c" style="left:184px;top:770.0px">12-2019</div>
<div class="t c" style="left:271px;top:770.0px">01.12.2019</div>
<div class="t c" style="left:382.5px;top:770.0px">31.12.2019</div>
<div class="t c" style="left:494px;top:770.0px">desember</div>
<div class="ck on" style="left:651px;top:771.0px"><svg style="left:1px;top:0.4px" width="11" height="11" viewBox="0 0 11 11"><path d="M1.9 6.2 L4.7 9.3 L10.9 2.4" fill="none" stroke="#000" stroke-width="2.5"/></svg></div>
<div class="ck" style="left:701px;top:771.0px"></div>
<div class="ck" style="left:751px;top:771.0px"></div>
<div class="ck" style="left:801px;top:771.0px"></div>
<div class="ck" style="left:851px;top:771.0px"></div>
<div class="ck" style="left:901px;top:771.0px"></div>
<div class="ck" style="left:951px;top:771.0px"></div>
<div class="row" style="top:794.5px"></div>
<svg style="left:34px;top:801.5px" width="12" height="17" viewBox="0 0 12 17"><path d="M11 7.2 V10.2 A4.6 4.6 0 0 1 1.8 10.2 V4.75 A3.4 3.4 0 0 1 8.6 4.75 V10.2 A2.2 2.2 0 0 1 4.2 10.2 V6" fill="none" stroke="url(#cg)" stroke-width="1.7" stroke-linecap="round"/></svg>
<svg style="left:66px;top:802.4px" width="14" height="15" viewBox="0 0 14 15"><path d="M0.65 0.65 H8.8 L13.15 5 V14.35 H0.65 Z" fill="url(#fg)" stroke="#abb0ba" stroke-width="1.3" stroke-linejoin="round"/><path d="M8.8 0.65 V5 H13.15" fill="none" stroke="#abb0ba" stroke-width="1.3" stroke-linejoin="round"/></svg>
<div class="t c" style="left:97.5px;top:802.0px">13</div>
<div class="t c" style="left:184px;top:802.0px">13-2019</div>
<div class="t c" style="left:271px;top:802.0px">31.12.2019</div>
<div class="t c" style="left:382.5px;top:802.0px">31.12.2019</div>
<div class="t c" style="left:494px;top:802.0px">Justeringsperiode</div>
<div class="ck on" style="left:651px;top:803.0px"><svg style="left:1px;top:0.4px" width="11" height="11" viewBox="0 0 11 11"><path d="M1.9 6.2 L4.7 9.3 L10.9 2.4" fill="none" stroke="#000" stroke-width="2.5"/></svg></div>
<div class="ck" style="left:701px;top:803.0px"></div>
<div class="ck" style="left:751px;top:803.0px"></div>
<div class="ck" style="left:801px;top:803.0px"></div>
<div class="ck" style="left:851px;top:803.0px"></div>
<div class="ck" style="left:901px;top:803.0px"></div>
<div class="ck" style="left:951px;top:803.0px"></div>
<div class="abs" style="left:22px;top:410.5px;width:1px;height:416px;background:#e3e5e9"></div>
<div class="abs" style="left:3px;top:442px;width:19px;height:1px;background:#e6e8eb;box-shadow:0 -1px 0 #fafbfc,0 1px 0 #fafbfc"></div>
<div class="abs" id="gbot"></div>
<div class="abs" id="lborder"></div>
</body>
</html>
